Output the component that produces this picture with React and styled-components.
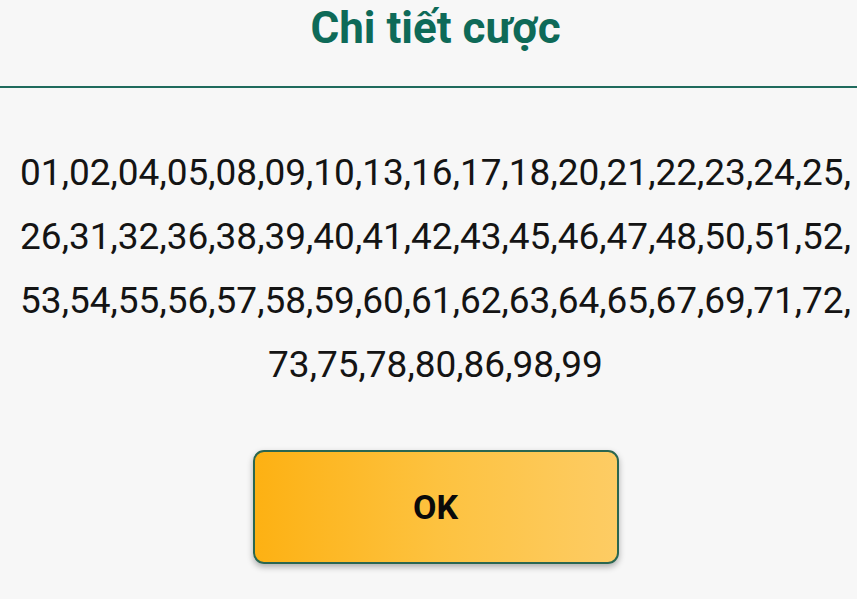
import React from "react";
import styled, { createGlobalStyle } from "styled-components";

const Global = createGlobalStyle`
  html, body { margin: 0; padding: 0; background: #f7f7f7; }
  body { font-family: Roboto, "Noto Sans", "Liberation Sans", sans-serif; }
`;

const Dialog = styled.div`
  width: 857px;
  height: 599px;
  box-sizing: border-box;
  padding-left: 14px;
  display: flex;
  flex-direction: column;
  background: #f7f7f7;
  overflow: hidden;
`;

const Header = styled.div`
  flex: none;
  height: 88px;
  box-sizing: border-box;
  padding-top: 2px;
  margin-left: -14px;
  padding-left: 14px;
  border-bottom: 2px solid #1f6b5d;
  text-align: center;
`;

const Title = styled.h1`
  margin: 0;
  font-size: 44px;
  line-height: 52px;
  font-weight: 700;
  color: #0e6a58;
`;

const Numbers = styled.p`
  margin: 0;
  padding-top: 53px;
  text-align: center;
  font-size: 37px;
  line-height: 64px;
  color: #141414;
`;

const Footer = styled.div`
  display: flex;
  justify-content: center;
  padding-top: 53px;
`;

const OkButton = styled.button`
  flex: none;
  width: 366px;
  height: 114px;
  box-sizing: border-box;
  border: 2px solid #2a6650;
  border-radius: 11px;
  background: linear-gradient(90deg, #fdb113 0%, #fdc23f 50%, #fdcc64 100%);
  box-shadow: 0 3px 6px rgba(0, 0, 0, 0.3);
  font-family: Roboto, "Noto Sans", sans-serif;
  font-size: 34px;
  font-weight: 700;
  color: #0a0a0a;
  cursor: pointer;
`;

const nums = [
  "01","02","04","05","08","09","10","13","16","17","18","20","21","22","23","24","25",
  "26","31","32","36","38","39","40","41","42","43","45","46","47","48","50","51","52",
  "53","54","55","56","57","58","59","60","61","62","63","64","65","67","69","71","72",
  "73","75","78","80","86","98","99",
];

export default function App() {
  return (
    <>
      <Global />
      <Dialog>
        <Header>
          <Title>Chi tiết cược</Title>
        </Header>
        <Numbers>
          {nums.map((n, i) => (
            <React.Fragment key={n}>
              {n}
              {i < nums.length - 1 ? "," : ""}
              <wbr />
            </React.Fragment>
          ))}
        </Numbers>
        <Footer>
          <OkButton>OK</OkButton>
        </Footer>
      </Dialog>
    </>
  );
}
